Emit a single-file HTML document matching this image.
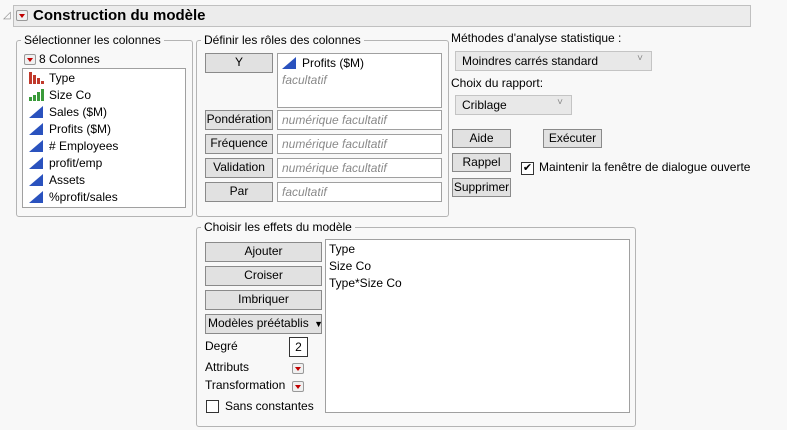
<!DOCTYPE html>
<html><head><meta charset="utf-8"><style>
*{box-sizing:border-box;margin:0;padding:0}
body{width:787px;height:430px;background:#f8f8f8;font-family:"Liberation Sans",sans-serif;font-size:12px;color:#000;position:relative;overflow:hidden}
.a{position:absolute}
.grp{position:absolute;border:1px solid #b4b4b4;border-radius:3px}
.lg{position:absolute;background:#f8f8f8;padding:0 3px;top:-8px;left:4px;white-space:nowrap}
.btn{position:absolute;background:#e1e1e1;border:1px solid #8a8a8a;text-align:center;line-height:17px;white-space:nowrap}
.box{position:absolute;background:#fff;border:1px solid #a0a0a0}
.ph{color:#8a8a8a;font-style:italic;padding-left:4px;line-height:18px}
.tri{position:absolute;width:12px;height:11px;border:1px solid #999;background:#f0f0f0;border-radius:2px}
.tri:after{content:"";position:absolute;left:2px;top:3px;border-left:3px solid transparent;border-right:3px solid transparent;border-top:4px solid #c00000}
.it{position:absolute;left:6px;white-space:nowrap;line-height:17px}
.it svg{vertical-align:-2px;margin-right:5px}
.dd{position:absolute;background:#e8e8e8;border:1px solid #c4c4c4;padding-left:6px;line-height:18px}
.dd:after{content:"˅";position:absolute;right:8px;top:-2px;color:#888;font-size:10px}
</style></head><body>
<div class="a" style="left:3px;top:10px;color:#888;font-size:10px">◿</div>
<div class="a" style="left:13px;top:5px;width:738px;height:22px;background:#ececec;border:1px solid #c0c0c0"></div>
<span class="tri" style="left:16px;top:10px"></span>
<div class="a" style="left:33px;top:7px;font-size:15px;font-weight:bold">Construction du modèle</div>

<div class="grp" style="left:16px;top:40px;width:177px;height:177px"><div class="lg">Sélectionner les colonnes</div></div>
<span class="tri" style="left:24px;top:54px"></span>
<div class="a" style="left:39px;top:52px">8 Colonnes</div>
<div class="box" style="left:22px;top:68px;width:164px;height:140px">
<div class="it" style="top:1px"><svg width="15" height="12"><rect x="0" y="0" width="3" height="12" fill="#c0392b"/><rect x="4" y="3" width="3" height="9" fill="#c0392b"/><rect x="8" y="6" width="3" height="6" fill="#c0392b"/><rect x="12" y="9" width="3" height="3" fill="#c0392b"/></svg>Type</div>
<div class="it" style="top:18px"><svg width="15" height="12"><rect x="0" y="8" width="3" height="4" fill="#3a9a3a"/><rect x="4" y="6" width="3" height="6" fill="#3a9a3a"/><rect x="8" y="3" width="3" height="9" fill="#3a9a3a"/><rect x="12" y="0" width="3" height="12" fill="#3a9a3a"/></svg>Size Co</div>
<div class="it" style="top:35px"><svg width="15" height="12"><polygon points="0,12 14,0 14,12" fill="#2a52be"/></svg>Sales ($M)</div>
<div class="it" style="top:52px"><svg width="15" height="12"><polygon points="0,12 14,0 14,12" fill="#2a52be"/></svg>Profits ($M)</div>
<div class="it" style="top:69px"><svg width="15" height="12"><polygon points="0,12 14,0 14,12" fill="#2a52be"/></svg># Employees</div>
<div class="it" style="top:86px"><svg width="15" height="12"><polygon points="0,12 14,0 14,12" fill="#2a52be"/></svg>profit/emp</div>
<div class="it" style="top:103px"><svg width="15" height="12"><polygon points="0,12 14,0 14,12" fill="#2a52be"/></svg>Assets</div>
<div class="it" style="top:120px"><svg width="15" height="12"><polygon points="0,12 14,0 14,12" fill="#2a52be"/></svg>%profit/sales</div>
</div>

<div class="grp" style="left:196px;top:40px;width:253px;height:177px"><div class="lg">Définir les rôles des colonnes</div></div>
<div class="btn" style="left:205px;top:53px;width:68px;height:20px">Y</div>
<div class="box" style="left:277px;top:53px;width:165px;height:55px">
<div class="it" style="left:4px;top:1px"><svg width="15" height="12"><polygon points="0,12 14,0 14,12" fill="#2a52be"/></svg>Profits ($M)</div>
<div class="ph" style="position:absolute;top:17px;left:0">facultatif</div></div>
<div class="btn" style="left:205px;top:110px;width:68px;height:20px">Pondération</div>
<div class="box ph" style="left:277px;top:110px;width:165px;height:20px">numérique facultatif</div>
<div class="btn" style="left:205px;top:134px;width:68px;height:20px">Fréquence</div>
<div class="box ph" style="left:277px;top:134px;width:165px;height:20px">numérique facultatif</div>
<div class="btn" style="left:205px;top:158px;width:68px;height:20px">Validation</div>
<div class="box ph" style="left:277px;top:158px;width:165px;height:20px">numérique facultatif</div>
<div class="btn" style="left:205px;top:182px;width:68px;height:20px">Par</div>
<div class="box ph" style="left:277px;top:182px;width:165px;height:20px">facultatif</div>

<div class="a" style="left:451px;top:31px">Méthodes d'analyse statistique :</div>
<div class="dd" style="left:455px;top:51px;width:197px;height:20px">Moindres carrés standard</div>
<div class="a" style="left:451px;top:76px">Choix du rapport:</div>
<div class="dd" style="left:455px;top:95px;width:117px;height:20px">Criblage</div>
<div class="btn" style="left:452px;top:129px;width:59px;height:19px">Aide</div>
<div class="btn" style="left:543px;top:129px;width:59px;height:19px">Exécuter</div>
<div class="btn" style="left:452px;top:153px;width:59px;height:19px">Rappel</div>
<div class="box" style="left:521px;top:162px;width:13px;height:13px;border-color:#333;font-size:11px;line-height:11px;text-align:center">✔</div>
<div class="a" style="left:539px;top:160px">Maintenir la fenêtre de dialogue ouverte</div>
<div class="btn" style="left:452px;top:178px;width:59px;height:19px">Supprimer</div>

<div class="grp" style="left:196px;top:227px;width:440px;height:200px"><div class="lg">Choisir les effets du modèle</div></div>
<div class="btn" style="left:205px;top:242px;width:117px;height:20px">Ajouter</div>
<div class="btn" style="left:205px;top:266px;width:117px;height:20px">Croiser</div>
<div class="btn" style="left:205px;top:290px;width:117px;height:20px">Imbriquer</div>
<div class="btn" style="left:205px;top:314px;width:117px;height:20px;text-align:left;padding-left:2px">Modèles préétablis <span style="font-size:9px;margin-left:2px">▼</span></div>
<div class="a" style="left:205px;top:339px">Degré</div>
<div class="box" style="left:289px;top:337px;width:19px;height:20px;border-color:#333;text-align:center;line-height:18px">2</div>
<div class="a" style="left:205px;top:360px">Attributs</div>
<span class="tri" style="left:292px;top:363px"></span>
<div class="a" style="left:205px;top:378px">Transformation</div>
<span class="tri" style="left:292px;top:381px"></span>
<div class="box" style="left:206px;top:400px;width:13px;height:13px;border-color:#333"></div>
<div class="a" style="left:225px;top:399px">Sans constantes</div>
<div class="box" style="left:325px;top:239px;width:305px;height:174px">
<div class="it" style="left:3px;top:1px">Type</div>
<div class="it" style="left:3px;top:18px">Size Co</div>
<div class="it" style="left:3px;top:35px">Type*Size Co</div>
</div>
</body></html>
